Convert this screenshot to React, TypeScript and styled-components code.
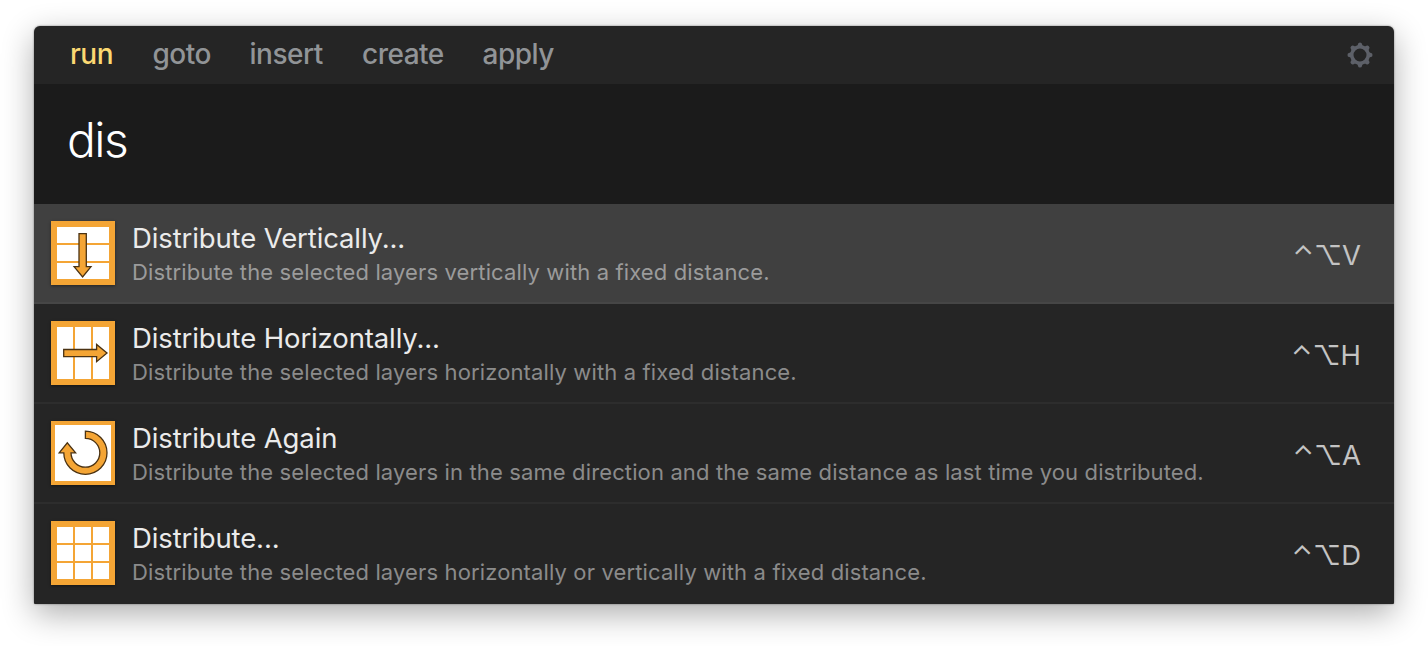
import React from "react";
import styled, { createGlobalStyle } from "styled-components";

const GlobalStyle = createGlobalStyle`
  body {
    margin: 0;
    background: #fff;
    font-family: Inter, "Liberation Sans", sans-serif;
  }
`;

const Page = styled.div`
  box-sizing: border-box;
  height: 646px;
  padding: 26px 34px 42px;
  overflow: hidden;
`;

const Palette = styled.main`
  height: 578px;
  border-radius: 6px 6px 2px 2px;
  overflow: hidden;
  background: #252525;
  box-shadow: 0 0 2px rgba(0, 0, 0, 0.5), 0 10px 32px rgba(0, 0, 0, 0.32);
`;

const TabBar = styled.nav`
  display: flex;
  align-items: center;
  height: 58px;
  padding: 0 21px 0 36px;
  box-sizing: border-box;
`;

const Tab = styled.span<{ $active?: boolean; $width: number }>`
  width: ${(p) => p.$width}px;
  padding-bottom: 2px;
  font-size: 28px;
  line-height: 34px;
  font-weight: 500;
  letter-spacing: -0.5px;
  white-space: nowrap;
  color: ${(p) => (p.$active ? "#fbd872" : "#919497")};
`;

const Settings = styled.span`
  display: flex;
  margin-left: auto;
`;

const Search = styled.div`
  display: flex;
  align-items: center;
  height: 120px;
  box-sizing: border-box;
  padding: 0 33px 10px;
  background: #1b1b1b;
  color: #fff;
  font-size: 48px;
  font-weight: 300;
  letter-spacing: -1.6px;
`;

const Row = styled.div<{ $selected?: boolean }>`
  display: flex;
  height: 100px;
  box-sizing: border-box;
  padding: 17px 33px 0 17px;
  border-bottom: 2px solid ${(p) => (p.$selected ? "#464646" : "#2d2d2d")};
  background: ${(p) => (p.$selected ? "#404040" : "#252525")};

  &:last-child {
    border-bottom-color: #252525;
  }
`;

const IconBox = styled.span`
  width: 64px;
  height: 64px;
  box-shadow: 0 1px 3px rgba(0, 0, 0, 0.45);
`;

const Labels = styled.div`
  display: flex;
  flex-direction: column;
  padding-left: 17px;
  white-space: nowrap;
`;

const Title = styled.span`
  font-size: 27.5px;
  line-height: 34px;
  letter-spacing: -0.12px;
  color: #ebebeb;
`;

const Description = styled.span<{ $selected?: boolean }>`
  font-size: 22px;
  line-height: 34px;
  letter-spacing: 0.13px;
  color: ${(p) => (p.$selected ? "#9b9b9b" : "#8b8b8b")};
`;

const Shortcut = styled.span`
  margin-left: auto;
  padding-top: 17px;
  font-size: 27.5px;
  line-height: 34px;
  color: #c3c3c3;
`;

const ORANGE = "#f4a535";
const OUTLINE = "#4a3213";

type Kind = "vertical" | "horizontal" | "again" | "grid";

function CommandIcon({ kind }: { kind: Kind }) {
  const spans = [6, 24, 42];
  return (
    <svg width="64" height="64" viewBox="0 0 64 64" display="block">
      <rect width="64" height="64" fill={ORANGE} />
      {kind === "again" && <rect x="4" y="4" width="56" height="56" fill="#fff" />}
      {kind === "vertical" &&
        spans.map((y) => <rect key={y} x="6" y={y} width="52" height="16" fill="#fff" />)}
      {kind === "horizontal" &&
        spans.map((x) => <rect key={x} x={x} y="6" width="16" height="52" fill="#fff" />)}
      {kind === "grid" &&
        spans.map((y) =>
          spans.map((x) => <rect key={`${x}-${y}`} x={x} y={y} width="16" height="16" fill="#fff" />)
        )}
      <g fill={ORANGE} stroke={OUTLINE} strokeWidth="1.3">
        {kind === "vertical" && <path d="M28 12.7H35.3V45.6H40L31.6 56L23.1 45.6H28Z" />}
        {kind === "horizontal" && <path d="M12.7 28.5V35.7H45.6V40.7L56 32L45.6 23.4V28.5Z" />}
        {kind === "again" && (
          <path d="M34.4 10.2A21.6 21.6 0 1 1 12.8 31.8H8.2L16.3 21.8L24.6 31.8H20A14.4 14.4 0 1 0 34.4 17.4Z" />
        )}
      </g>
    </svg>
  );
}

function Gear() {
  return (
    <svg width="26" height="26" viewBox="-13 -13 26 26" display="block">
      <circle r="8.2" fill="none" stroke="#5d6068" strokeWidth="3.4" />
      {[0, 45, 90, 135, 180, 225, 270, 315].map((a) => (
        <path
          key={a}
          transform={`rotate(${a})`}
          d="M-3.2 -8.8Q-2.1 -9.6 -2 -11Q-1.8 -12.5 0 -12.5Q1.8 -12.5 2 -11Q2.1 -9.6 3.2 -8.8Z"
          fill="#5d6068"
        />
      ))}
    </svg>
  );
}

const tabs = [
  { name: "run", width: 82.5 },
  { name: "goto", width: 97 },
  { name: "insert", width: 112.5 },
  { name: "create", width: 120.5 },
  { name: "apply", width: 80 },
];

const commands: { kind: Kind; title: string; text: string; keys: string }[] = [
  {
    kind: "vertical",
    title: "Distribute Vertically...",
    text: "Distribute the selected layers vertically with a fixed distance.",
    keys: "⌃⌥V",
  },
  {
    kind: "horizontal",
    title: "Distribute Horizontally...",
    text: "Distribute the selected layers horizontally with a fixed distance.",
    keys: "⌃⌥H",
  },
  {
    kind: "again",
    title: "Distribute Again",
    text: "Distribute the selected layers in the same direction and the same distance as last time you distributed.",
    keys: "⌃⌥A",
  },
  {
    kind: "grid",
    title: "Distribute...",
    text: "Distribute the selected layers horizontally or vertically with a fixed distance.",
    keys: "⌃⌥D",
  },
];

export default function App() {
  return (
    <Page>
      <GlobalStyle />
      <Palette>
        <TabBar>
          {tabs.map((t, i) => (
            <Tab key={t.name} $active={i === 0} $width={t.width}>
              {t.name}
            </Tab>
          ))}
          <Settings>
            <Gear />
          </Settings>
        </TabBar>
        <Search>dis</Search>
        {commands.map((c, i) => (
          <Row key={c.kind} $selected={i === 0}>
            <IconBox>
              <CommandIcon kind={c.kind} />
            </IconBox>
            <Labels>
              <Title>{c.title}</Title>
              <Description $selected={i === 0}>{c.text}</Description>
            </Labels>
            <Shortcut>{c.keys}</Shortcut>
          </Row>
        ))}
      </Palette>
    </Page>
  );
}
